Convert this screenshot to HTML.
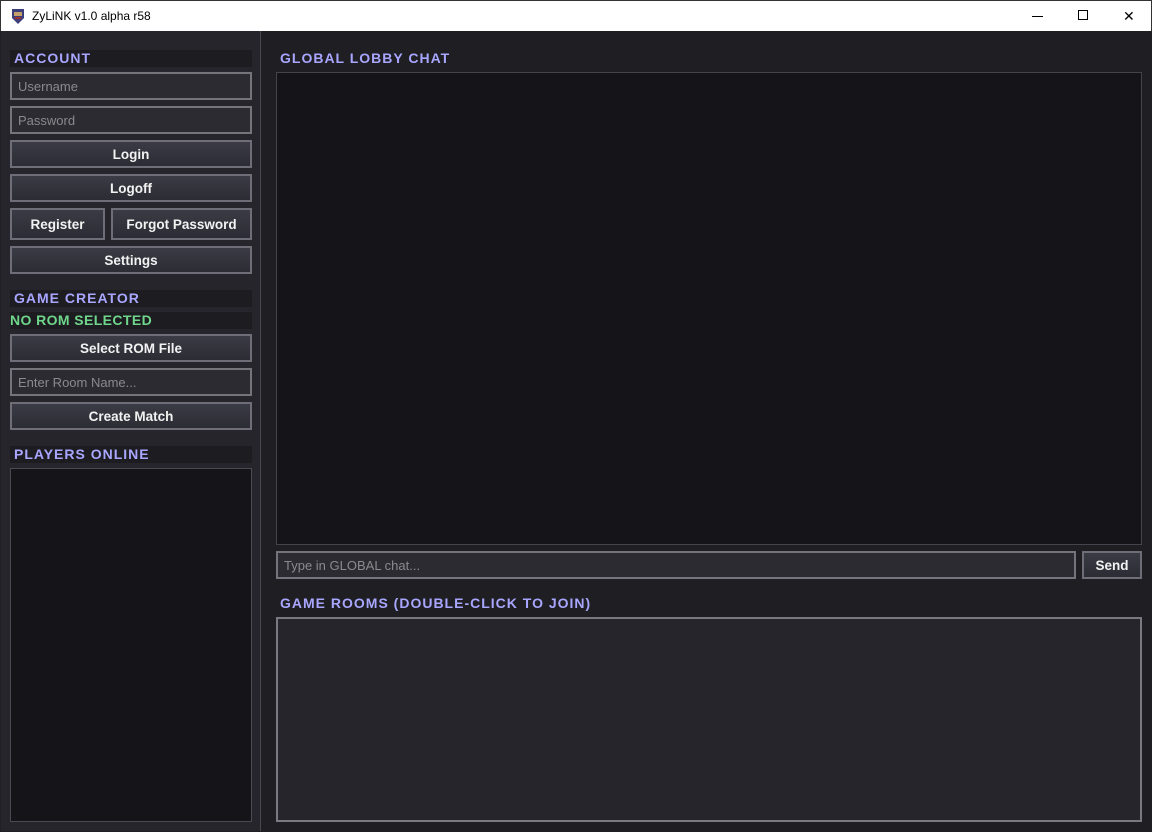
<!DOCTYPE html>
<html><head><meta charset="utf-8"><style>
*{box-sizing:border-box;margin:0;padding:0}
body{width:1152px;height:832px;overflow:hidden;background:#1f1f24;font-family:"Liberation Sans",sans-serif;position:relative}
.a{position:absolute}
.title{left:0;top:0;width:1152px;height:31px;background:#fff;border:1px solid #333;border-bottom:none}
.left{left:1px;top:31px;width:259px;height:800px;background:#25252b}
.sep{left:260px;top:31px;width:1px;height:800px;background:#48484f}
.right{left:261px;top:31px;width:890px;height:800px;background:#1e1e23}
.hdr{background:#1c1c21;color:#a9a6ff;font-size:14px;font-weight:bold;letter-spacing:1px;padding-left:4px;line-height:17px;height:17px}
.in{border:2px solid #75747c;background:#2b2b31;color:#8a8a8e;font-size:13px;padding-left:6px;display:flex;align-items:center}
.btn{border:2px solid #6f6e78;background:linear-gradient(#3b3b45,#2c2c34);color:#f2f2f2;font-size:13.5px;font-weight:bold;display:flex;align-items:center;justify-content:center}
.box{border:1px solid #44444b;background:#151519}
</style></head><body>
<div class="a title">
 <svg class="a" style="left:9px;top:6px" width="16" height="18" viewBox="0 0 16 18"><path d="M2 2h12v9l-6 6-6-6z" fill="#3d3f7a"/><rect x="4" y="5" width="8" height="4" fill="#c4a06a"/><rect x="5" y="10" width="6" height="2" fill="#a03030"/></svg>
 <div class="a" style="left:31px;top:8px;font-size:12px;color:#000">ZyLiNK v1.0 alpha r58</div>
 <div class="a" style="left:1031px;top:15px;width:11px;height:1px;background:#000"></div>
 <div class="a" style="left:1077px;top:9px;width:10px;height:10px;border:1px solid #000"></div>
 <div class="a" style="left:1122px;top:7px;font-size:14px;color:#000">✕</div>
</div>
<div class="a left"></div>
<div class="a sep"></div>
<div class="a right"></div>

<div class="a hdr" style="left:10px;top:50px;width:242px">ACCOUNT</div>
<div class="a in" style="left:10px;top:72px;width:242px;height:28px">Username</div>
<div class="a in" style="left:10px;top:106px;width:242px;height:28px">Password</div>
<div class="a btn" style="left:10px;top:140px;width:242px;height:28px">Login</div>
<div class="a btn" style="left:10px;top:174px;width:242px;height:28px">Logoff</div>
<div class="a btn" style="left:10px;top:208px;width:95px;height:32px">Register</div>
<div class="a btn" style="left:111px;top:208px;width:141px;height:32px">Forgot Password</div>
<div class="a btn" style="left:10px;top:246px;width:242px;height:28px">Settings</div>

<div class="a hdr" style="left:10px;top:290px;width:242px">GAME CREATOR</div>
<div class="a hdr" style="left:10px;top:312px;width:242px;color:#6fd68b;padding-left:0;letter-spacing:0.4px">NO ROM SELECTED</div>
<div class="a btn" style="left:10px;top:334px;width:242px;height:28px">Select ROM File</div>
<div class="a in" style="left:10px;top:368px;width:242px;height:28px">Enter Room Name...</div>
<div class="a btn" style="left:10px;top:402px;width:242px;height:28px">Create Match</div>

<div class="a hdr" style="left:10px;top:446px;width:242px">PLAYERS ONLINE</div>
<div class="a box" style="left:10px;top:468px;width:242px;height:354px;border-color:#4a4a52"></div>

<div class="a hdr" style="left:276px;top:50px;width:300px;background:none">GLOBAL LOBBY CHAT</div>
<div class="a box" style="left:276px;top:72px;width:866px;height:473px"></div>
<div class="a in" style="left:276px;top:551px;width:800px;height:28px">Type in GLOBAL chat...</div>
<div class="a btn" style="left:1082px;top:551px;width:60px;height:28px">Send</div>

<div class="a hdr" style="left:276px;top:595px;width:400px;background:none">GAME ROOMS (DOUBLE-CLICK TO JOIN)</div>
<div class="a" style="left:276px;top:617px;width:866px;height:205px;border:2px solid #7a7982;background:#25252b"></div>
</body></html>
